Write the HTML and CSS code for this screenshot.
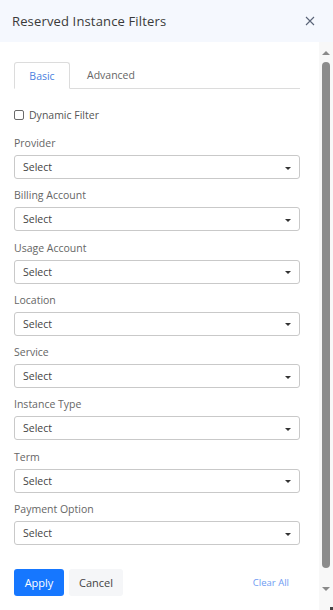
FILE: index.html
```html
<!DOCTYPE html>
<html>
<head>
<meta charset="utf-8">
<link rel="stylesheet" href="styles.css">
</head>
<body>
<div class="panel">
  <header class="head">
    <h1 class="title">Reserved Instance Filters</h1>
    <svg class="close" width="10" height="10" viewBox="0 0 10 10"><path d="M1 1L9 9M9 1L1 9" stroke="#5a6478" stroke-width="1.1" fill="none"/></svg>
  </header>
  <div class="main">
    <div class="content">
      <div class="tabs">
        <div class="tab active">Basic</div>
        <div class="tab">Advanced</div>
      </div>
      <label class="check"><span class="box"></span>Dynamic Filter</label>
      <div class="fields">
        <div class="field"><div class="lbl">Provider</div><div class="sel">Select<span class="caret"></span></div></div>
        <div class="field"><div class="lbl">Billing Account</div><div class="sel">Select<span class="caret"></span></div></div>
        <div class="field"><div class="lbl">Usage Account</div><div class="sel">Select<span class="caret"></span></div></div>
        <div class="field"><div class="lbl">Location</div><div class="sel">Select<span class="caret"></span></div></div>
        <div class="field"><div class="lbl">Service</div><div class="sel">Select<span class="caret"></span></div></div>
        <div class="field"><div class="lbl">Instance Type</div><div class="sel">Select<span class="caret"></span></div></div>
        <div class="field"><div class="lbl">Term</div><div class="sel">Select<span class="caret"></span></div></div>
        <div class="field"><div class="lbl">Payment Option</div><div class="sel">Select<span class="caret"></span></div></div>
      </div>
      <div class="actions">
        <button class="btn apply">Apply</button>
        <button class="btn cancel">Cancel</button>
        <span class="clear">Clear All</span>
      </div>
    </div>
    <div class="scrollbar">
      <span class="arrow up"></span>
      <div class="thumb"></div>
      <span class="arrow down"></span>
      <span class="corner"></span>
    </div>
  </div>
</div>
</body>
</html>
```
FILE: styles.css
```css
* { box-sizing: border-box; }
html, body { margin: 0; padding: 0; background: #fff; }
body { font-family: "Open Sans", "Noto Sans", sans-serif; color: #555; width: 333px; height: 610px; overflow: hidden; }
.panel { display: flex; flex-direction: column; height: 610px; }
.head { height: 42px; background: #f5f8fe; display: flex; align-items: center; justify-content: space-between; padding: 0 18px 0 12px; flex: none; }
.title { margin: 0; font-size: 13px; font-weight: 400; color: #3a3a3a; letter-spacing: 0.15px; }
.close { display: block; }
.main { flex: 1; display: flex; min-height: 0; }
.content { flex: 1; padding: 20px 19px 0 14px; }
.tabs { display: flex; border-bottom: 1px solid #dcdcdc; height: 27px; }
.tab { font-size: 10.5px; line-height: 26px; color: #666; padding: 0 17px; }
.tab.active { width: 56px; padding: 0; text-align: center; color: #4a7fe0; border: 1px solid #dcdcdc; border-bottom: 1px solid #fff; border-radius: 3px 3px 0 0; margin-bottom: -1px; height: 27px; }
.check { display: flex; align-items: center; font-size: 10.5px; color: #555; margin-top: 20px; height: 12px; }
.box { width: 10px; height: 10px; border: 1px solid #6a6a6a; border-radius: 2px; margin-right: 5px; }
.fields { display: flex; flex-direction: column; gap: 10.3px; margin-top: 16px; }
.lbl { font-size: 10.5px; color: #666; line-height: 12px; margin-bottom: 6px; }
.sel { height: 24px; border: 1px solid #c9c9c9; border-radius: 3px; display: flex; align-items: center; justify-content: space-between; padding: 0 8px; font-size: 10.5px; color: #444; }
.caret { width: 0; height: 0; border-left: 3px solid transparent; border-right: 3px solid transparent; border-top: 3px solid #333; margin-top: 2px; }
.actions { display: flex; align-items: center; margin-top: 24px; }
.btn { font-family: inherit; font-size: 11px; border: 0; border-radius: 3px; height: 27px; padding: 0; cursor: pointer; }
.apply { background: #1677ff; color: #fff; width: 50px; }
.cancel { background: #f5f6f8; color: #444; width: 54px; margin-left: 5px; }
.clear { margin-left: auto; margin-right: 11px; font-size: 9.5px; color: #6e9cf3; }
.scrollbar { width: 14px; background: #f8f8f8; display: flex; flex-direction: column; align-items: center; position: relative; padding-top: 9px; }
.arrow { width: 0; height: 0; border-left: 4px solid transparent; border-right: 4px solid transparent; }
.arrow.up { border-bottom: 4px solid #8a8a8a; }
.arrow.down { border-top: 4px solid #8a8a8a; margin-top: 19px; }
.thumb { width: 8px; height: 506px; background: #8c8c8c; border-radius: 4px; margin-top: 7px; }
.corner { position: absolute; right: 0; bottom: 0; width: 3px; height: 3px; background: #444; }
```
